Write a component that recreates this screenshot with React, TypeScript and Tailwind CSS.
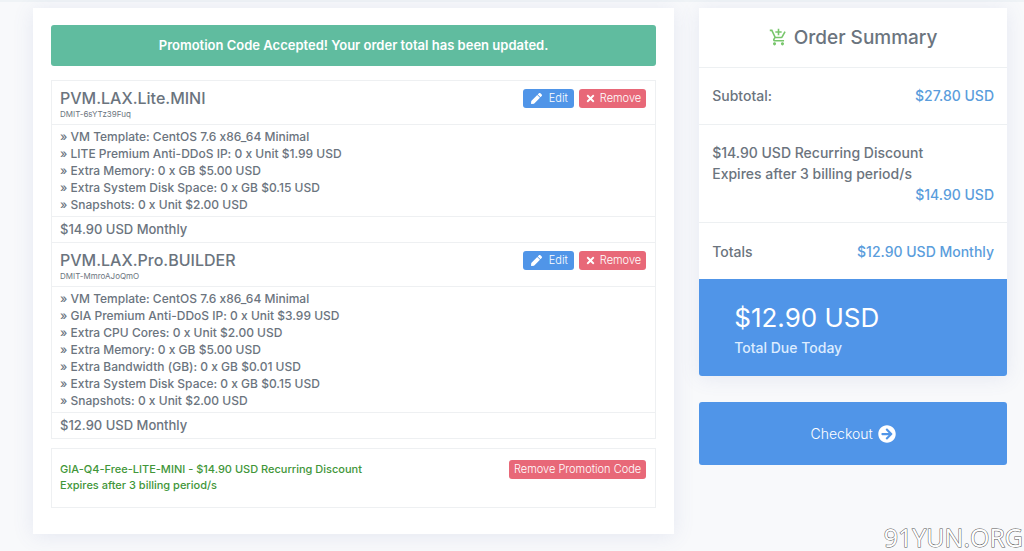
import React from 'react';
import { FaPen, FaTimes, FaArrowCircleRight } from 'react-icons/fa';
import { MdAddShoppingCart } from 'react-icons/md';

interface CartItem {
  name: string;
  domain: string;
  options: string[];
  price: string;
}

const items: CartItem[] = [
  {
    name: 'PVM.LAX.Lite.MINI',
    domain: 'DMIT-6sYTz39Fuq',
    options: [
      'VM Template: CentOS 7.6 x86_64 Minimal',
      'LITE Premium Anti-DDoS IP: 0 x Unit $1.99 USD',
      'Extra Memory: 0 x GB $5.00 USD',
      'Extra System Disk Space: 0 x GB $0.15 USD',
      'Snapshots: 0 x Unit $2.00 USD',
    ],
    price: '$14.90 USD Monthly',
  },
  {
    name: 'PVM.LAX.Pro.BUILDER',
    domain: 'DMIT-MmroAJoQmO',
    options: [
      'VM Template: CentOS 7.6 x86_64 Minimal',
      'GIA Premium Anti-DDoS IP: 0 x Unit $3.99 USD',
      'Extra CPU Cores: 0 x Unit $2.00 USD',
      'Extra Memory: 0 x GB $5.00 USD',
      'Extra Bandwidth (GB): 0 x GB $0.01 USD',
      'Extra System Disk Space: 0 x GB $0.15 USD',
      'Snapshots: 0 x Unit $2.00 USD',
    ],
    price: '$12.90 USD Monthly',
  },
];

const CartRow = ({ item }: { item: CartItem }) => (
  <div className="border-t border-[#eef0f2]">
    <div className="flex items-start justify-between h-[43px] pl-2 pr-[9px] pt-2">
      <div>
        <h2 className="text-[16px] leading-[18px] font-medium">{item.name}</h2>
        <p className="text-[8px] leading-[14px]">{item.domain}</p>
      </div>
      <div className="flex gap-[5px] text-[11px] font-light text-white">
        <a href="#edit" className="flex items-center gap-[7px] h-[19px] pl-2 pr-[6px] rounded-[3px] bg-[#5095e8]">
          <FaPen size={11} />
          Edit
        </a>
        <button type="button" className="flex items-center gap-1 h-[19px] pl-[6px] pr-[5px] rounded-[3px] bg-[#e86878]">
          <FaTimes size={11} />
          Remove
        </button>
      </div>
    </div>
    <ul className="border-t border-[#eef0f2] px-2 py-[3px] text-[12px] leading-[17px] font-medium">
      {item.options.map((option) => (
        <li key={option}>» {option}</li>
      ))}
    </ul>
    <div className="border-t border-[#eef0f2] px-2 text-[13px] leading-[25px] font-medium">
      {item.price}
    </div>
  </div>
);

const App = () => {
  return (
    <div className="relative min-h-screen bg-[#f8f9fb] border-t-2 border-[#eff3f6] pt-[6px] pb-[18px] pl-[33px] pr-[17px] font-['Inter',sans-serif] [font-feature-settings:'calt'_0] text-[#6b747e]">
      <div className="grid grid-cols-[25fr_12fr] items-start gap-[25px]">
        <main className="bg-white px-[18px] pt-[17px] pb-[26px] shadow-[0_2px_20px_rgba(90,110,170,0.12)]">
          <div role="alert" className="rounded-[3px] bg-[#60bc9f] py-3 mb-[14px] text-center text-[13px] leading-[17px] font-semibold text-white">
            Promotion Code Accepted! Your order total has been updated.
          </div>

          <div className="border-x border-b border-[#eef0f2]">
            {items.map((item) => (
              <CartRow key={item.name} item={item} />
            ))}
          </div>

          <div className="flex items-start justify-between mt-[9px] border border-[#eef0f2] pl-2 pr-[9px] pt-[11px] pb-[14px]">
            <p className="pt-px text-[11px] leading-4 font-medium text-[#419639]">
              GIA-Q4-Free-LITE-MINI - $14.90 USD Recurring Discount
              <br />
              Expires after 3 billing period/s
            </p>
            <button type="button" className="h-[19px] px-[5px] rounded-[3px] bg-[#e86878] text-[11px] leading-[19px] font-light text-white">
              Remove Promotion Code
            </button>
          </div>
        </main>

        <aside className="text-[14px] leading-[21px] font-medium">
          <div className="rounded-b-[3px] bg-white shadow-[0_2px_20px_rgba(90,110,170,0.12)]">
            <h2 className="flex items-center justify-center gap-[6px] h-[59px] text-[19px]">
              <MdAddShoppingCart size={19} className="text-[#78c66c]" />
              Order Summary
            </h2>
            <div className="flex justify-between border-t border-[#edf0f2] px-[13px] pt-[17px] pb-[18px]">
              <span>Subtotal:</span>
              <span className="text-[#5a9ddc]">$27.80 USD</span>
            </div>
            <div className="border-t border-[#edf0f2] px-[13px] pt-[17px] pb-[17px]">
              <p>
                $14.90 USD Recurring Discount
                <br />
                Expires after 3 billing period/s
              </p>
              <p className="text-right text-[#5a9ddc]">$14.90 USD</p>
            </div>
            <div className="flex justify-between border-t border-[#edf0f2] px-[13px] pt-[18px] pb-[17px]">
              <span>Totals</span>
              <span className="text-[#5a9ddc]">$12.90 USD Monthly</span>
            </div>
            <div className="rounded-b-[3px] bg-[#5095e8] px-[35px] pt-[19px] pb-[18px] text-white">
              <p className="text-[26px] leading-[39px] font-normal">$12.90 USD</p>
              <p className="text-[#dcecff]">Total Due Today</p>
            </div>
          </div>

          <button
            type="button"
            className="mt-[26px] flex w-full h-[63px] items-center justify-center gap-[5px] rounded-[3px] bg-[#5095e8] text-[14px] font-light text-white"
          >
            Checkout
            <FaArrowCircleRight size={18} />
          </button>
        </aside>
      </div>

      <span className="absolute right-px bottom-0 font-['Open_Sans',sans-serif] text-[25px] leading-[30px] text-white [-webkit-text-stroke:1px_#555555] [paint-order:stroke_fill]">
        91YUN.ORG
      </span>
    </div>
  );
};

export default App;
